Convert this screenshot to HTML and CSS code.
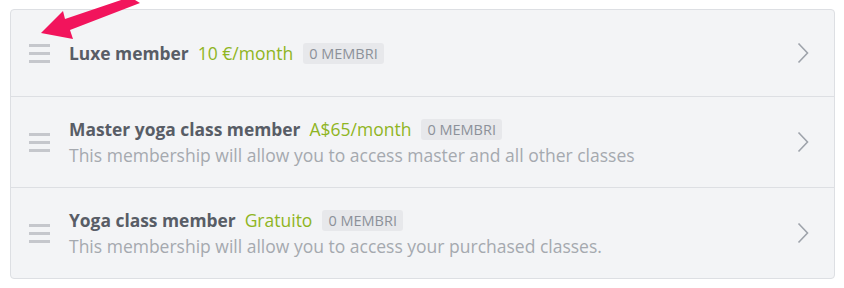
FILE: index.html
```html
<!DOCTYPE html>
<html>
<head>
<meta charset="utf-8">
<link rel="stylesheet" href="styles.css">
</head>
<body>
<div class="page">
  <ul class="list">
    <li class="row row-single">
      <span class="handle"><i></i><i></i><i></i></span>
      <div class="content">
        <div class="head">
          <span class="name">Luxe member</span>
          <span class="price">10 €/month</span>
          <span class="badge">0 Membri</span>
        </div>
      </div>
      <svg class="chev" width="12" height="22" viewBox="0 0 12 22"><path d="M1.5 1.5 L10.5 11 L1.5 20.5" fill="none" stroke="#9ea3ab" stroke-width="1.6"/></svg>
    </li>
    <li class="row">
      <span class="handle"><i></i><i></i><i></i></span>
      <div class="content">
        <div class="head">
          <span class="name">Master yoga class member</span>
          <span class="price">A$65/month</span>
          <span class="badge">0 Membri</span>
        </div>
        <div class="desc">This membership will allow you to access master and all other classes</div>
      </div>
      <svg class="chev" width="12" height="22" viewBox="0 0 12 22"><path d="M1.5 1.5 L10.5 11 L1.5 20.5" fill="none" stroke="#9ea3ab" stroke-width="1.6"/></svg>
    </li>
    <li class="row">
      <span class="handle"><i></i><i></i><i></i></span>
      <div class="content">
        <div class="head">
          <span class="name">Yoga class member</span>
          <span class="price">Gratuito</span>
          <span class="badge">0 Membri</span>
        </div>
        <div class="desc">This membership will allow you to access your purchased classes.</div>
      </div>
      <svg class="chev" width="12" height="22" viewBox="0 0 12 22"><path d="M1.5 1.5 L10.5 11 L1.5 20.5" fill="none" stroke="#9ea3ab" stroke-width="1.6"/></svg>
    </li>
  </ul>
  <svg class="pointer" width="150" height="50" viewBox="0 0 150 50">
    <polygon points="41,33 63,11 65,19 130,-3 140,3 70,30 73,39" fill="#f2145c"/>
  </svg>
</div>
</body>
</html>
```

FILE: styles.css
```css
* { box-sizing: border-box; }
html, body { margin: 0; padding: 0; background: #ffffff; }
body {
  font-family: "Open Sans", "Noto Sans", sans-serif;
  width: 844px;
  height: 288px;
  overflow: hidden;
}
.page {
  position: relative;
  padding: 9px 9px 0 10px;
}
.list {
  list-style: none;
  margin: 0;
  padding: 0;
  background: #f3f4f6;
  border: 1px solid #dddfe3;
  border-radius: 4px;
  width: 825px;
}
.row {
  display: flex;
  align-items: center;
  height: 91px;
  padding: 0 25px 0 18px;
  border-top: 1px solid #dddfe3;
}
.row:first-child { border-top: none; height: 86px; }
.handle {
  display: flex;
  flex-direction: column;
  gap: 5px;
  width: 21px;
  margin-right: 19px;
}
.handle i {
  display: block;
  height: 3px;
  background: #c5c7cc;
}
.content { flex: 1; display: flex; flex-direction: column; }
.head { display: flex; align-items: center; height: 26px; }
.name {
  font-weight: 700;
  font-size: 17.4px;
  color: #585d66;
  margin-right: 9px;
}
.price {
  font-size: 17.5px;
  color: #8fb523;
  margin-right: 10px;
}
.badge {
  font-size: 14.5px;
  text-transform: uppercase;
  color: #8c9199;
  background: #e7e8eb;
  border-radius: 3px;
  padding: 0 6px;
  line-height: 21px;
}
.desc {
  font-size: 17.5px;
  color: #a5a9af;
  line-height: 26px;
}
.chev { display: block; }
.pointer {
  position: absolute;
  left: 0;
  top: 0;
}
```
